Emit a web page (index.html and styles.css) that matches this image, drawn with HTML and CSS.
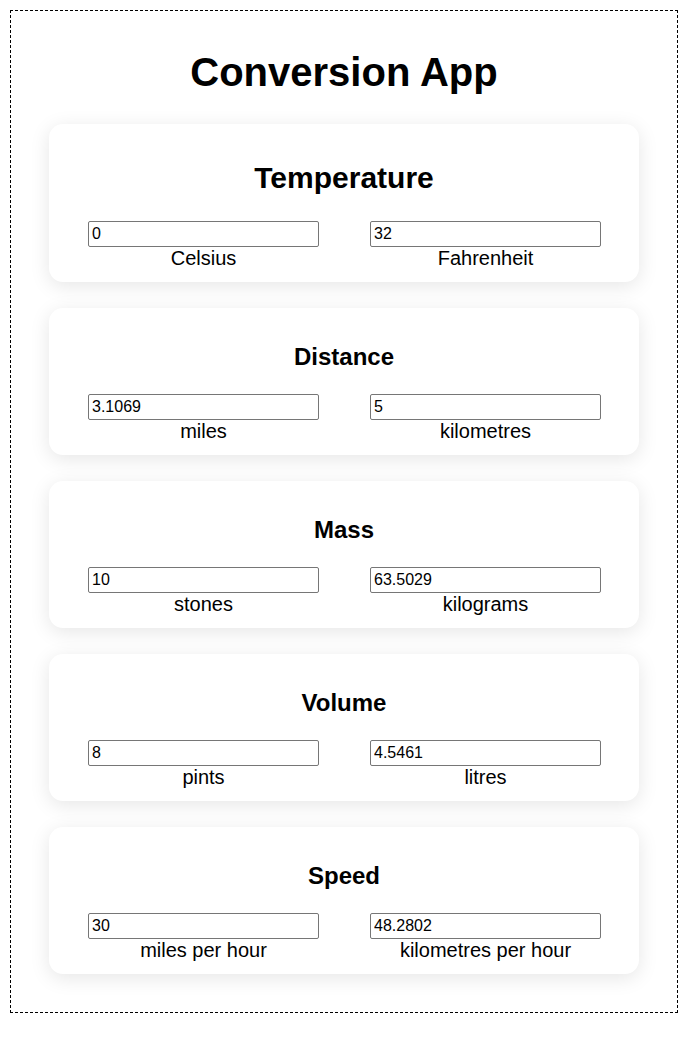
FILE: index.html
```html
<!DOCTYPE html>
<html lang="en">
<head>
<meta charset="utf-8">
<title>Conversion App</title>
<link rel="stylesheet" href="styles.css">
</head>
<body>
<div class="app">
  <h1 class="app-title">Conversion App</h1>
  <div class="cards">
    <section class="card">
      <h2 class="card-title card-title-main">Temperature</h2>
      <div class="pair">
        <div class="field"><input class="num" type="text" value="0"><label class="unit">Celsius</label></div>
        <div class="field"><input class="num" type="text" value="32"><label class="unit">Fahrenheit</label></div>
      </div>
    </section>
    <section class="card">
      <h2 class="card-title">Distance</h2>
      <div class="pair">
        <div class="field"><input class="num" type="text" value="3.1069"><label class="unit">miles</label></div>
        <div class="field"><input class="num" type="text" value="5"><label class="unit">kilometres</label></div>
      </div>
    </section>
    <section class="card">
      <h2 class="card-title">Mass</h2>
      <div class="pair">
        <div class="field"><input class="num" type="text" value="10"><label class="unit">stones</label></div>
        <div class="field"><input class="num" type="text" value="63.5029"><label class="unit">kilograms</label></div>
      </div>
    </section>
    <section class="card">
      <h2 class="card-title">Volume</h2>
      <div class="pair">
        <div class="field"><input class="num" type="text" value="8"><label class="unit">pints</label></div>
        <div class="field"><input class="num" type="text" value="4.5461"><label class="unit">litres</label></div>
      </div>
    </section>
    <section class="card">
      <h2 class="card-title">Speed</h2>
      <div class="pair">
        <div class="field"><input class="num" type="text" value="30"><label class="unit">miles per hour</label></div>
        <div class="field"><input class="num" type="text" value="48.2802"><label class="unit">kilometres per hour</label></div>
      </div>
    </section>
  </div>
</div>
</body>
</html>
```

FILE: styles.css
```css
html, body {
  margin: 0;
  padding: 0;
  background: #fff;
}
body {
  padding: 10px;
  font-family: "Liberation Sans", Arial, sans-serif;
  color: #000;
}
.app {
  border: 1px dashed #000;
  padding: 38px 38px 38px;
}
.app-title {
  margin: 0 0 29px;
  font-size: 40px;
  line-height: 46px;
  font-weight: bold;
  text-align: center;
}
.cards {
  display: flex;
  flex-direction: column;
  gap: 26px;
}
.card {
  background: #fff;
  border-radius: 14px;
  box-shadow: 0 4px 20px rgba(0, 0, 0, 0.1);
  padding: 0 0 12.5px;
}
.card-title {
  margin: 34.5px 0 23.5px;
  font-size: 24px;
  line-height: 27.5px;
  font-weight: bold;
  text-align: center;
}
.card-title-main {
  margin: 37px 0 25px;
  font-size: 30px;
  line-height: 34.5px;
}
.pair {
  display: grid;
  grid-template-columns: 231px 231px;
  column-gap: 51px;
  padding-left: 39px;
}
.field {
  display: flex;
  flex-direction: column;
  align-items: center;
}
.num {
  box-sizing: border-box;
  width: 231px;
  height: 26px;
  margin: 0;
  padding: 0 3px;
  border: 1px solid #767676;
  border-radius: 2px;
  font-family: "Liberation Sans", Arial, sans-serif;
  font-size: 16px;
  color: #000;
  background: #fff;
}
.unit {
  font-size: 20px;
  line-height: 23px;
}
```
